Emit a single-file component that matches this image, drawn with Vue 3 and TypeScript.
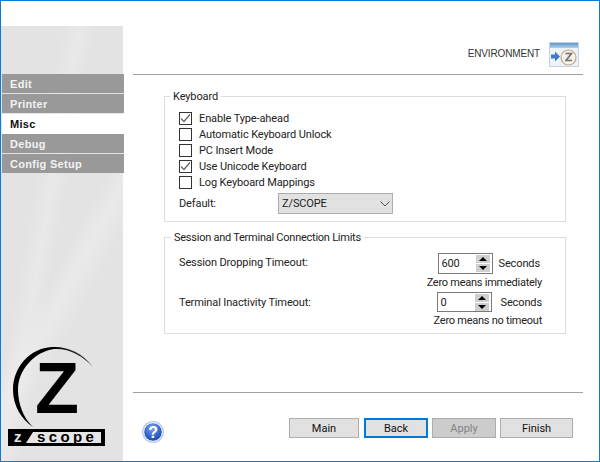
<script setup lang="ts">
const navItems = [
  { label: 'Edit', active: false },
  { label: 'Printer', active: false },
  { label: 'Misc', active: true },
  { label: 'Debug', active: false },
  { label: 'Config Setup', active: false },
]
const options = [
  { label: 'Enable Type-ahead', checked: true },
  { label: 'Automatic Keyboard Unlock', checked: false },
  { label: 'PC Insert Mode', checked: false },
  { label: 'Use Unicode Keyboard', checked: true },
  { label: 'Log Keyboard Mappings', checked: false },
]
</script>

<template>
  <div class="window">
    <aside class="sidebar">
      <nav class="nav">
        <div v-for="item in navItems" :key="item.label" class="nav-item" :class="{ active: item.active }">{{ item.label }}</div>
      </nav>
      <svg class="logo" width="106" height="106" viewBox="0 0 106 106">
        <defs>
          <linearGradient id="arcFade" x1="0" y1="1" x2="1" y2="0">
            <stop offset="0" stop-color="#000" />
            <stop offset="0.75" stop-color="#000" />
            <stop offset="1" stop-color="#666" />
          </linearGradient>
        </defs>
        <path d="M92 24 C81 9 65 3 51 4 C29 5 12 24 12 47 C12 62 20 76 32 84 C22 75 17 60 17 47 C17 27 33 9 53 6 C68 5 82 13 92 24 Z" fill="url(#arcFade)" />
        <text x="34" y="70" class="logo-z">Z</text>
        <rect x="7" y="86" width="97" height="17" fill="#000" />
        <polygon points="25,100 32,89 100,89 100,100" fill="#e6e6e6" />
        <text x="13" y="99" class="band-z">z</text>
        <text x="36" y="99" class="band-scope">scope</text>
      </svg>
    </aside>

    <main class="main">
      <header class="head">
        <span class="head-title">ENVIRONMENT</span>
        <svg class="env-icon" width="30" height="25" viewBox="0 0 30 25">
          <defs>
            <linearGradient id="envBar" x1="0" y1="0" x2="0" y2="1">
              <stop offset="0" stop-color="#5f97cb" />
              <stop offset="1" stop-color="#b5d0e8" />
            </linearGradient>
          </defs>
          <rect x="0.5" y="0.5" width="29" height="24" fill="#edf3f9" stroke="#c3d2e0" />
          <rect x="1" y="1" width="28" height="5" fill="url(#envBar)" />
          <circle cx="19.5" cy="15.5" r="7.5" fill="#f6f3ec" stroke="#c4a987" stroke-width="1.2" />
          <rect x="15.5" y="10.5" width="8" height="9" fill="#ecebe8" />
          <path d="M16.5 11.5 H22.5 L17 18.5 H23" fill="none" stroke="#77736e" stroke-width="1.6" />
          <path d="M2 12.5 H6 V9.5 L11 14.5 L6 19.5 V16.5 H2 Z" fill="#3f7cc4" />
        </svg>
      </header>

      <div class="panels">
        <fieldset class="group kb">
          <legend>Keyboard</legend>
          <label v-for="o in options" :key="o.label" class="check-row">
            <span class="box">
              <svg v-if="o.checked" width="11" height="11" viewBox="0 0 11 11"><path d="M1 5.5 L4 8.5 L10 1.5" fill="none" stroke="#666" stroke-width="1.3" /></svg>
            </span>
            <span>{{ o.label }}</span>
          </label>
          <div class="default-row">
            <span class="default-label">Default:</span>
            <div class="select">
              <span>Z/SCOPE</span>
              <svg width="10" height="6" viewBox="0 0 10 6"><path d="M0.5 0.5 L5 5 L9.5 0.5" fill="none" stroke="#555" stroke-width="1" /></svg>
            </div>
          </div>
        </fieldset>

        <fieldset class="group limits">
          <legend>Session and Terminal Connection Limits</legend>
          <div class="limit">
            <span class="limit-label">Session Dropping Timeout:</span>
            <div class="limit-ctl first">
              <div class="spin-line">
                <div class="spin">
                  <span>600</span>
                  <div class="arrows"><i class="up"></i><i class="down"></i></div>
                </div>
                <span class="secs">Seconds</span>
              </div>
              <div class="hint">Zero means immediately</div>
            </div>
          </div>
          <div class="limit second">
            <span class="limit-label">Terminal Inactivity Timeout:</span>
            <div class="limit-ctl">
              <div class="spin-line">
                <div class="spin">
                  <span>0</span>
                  <div class="arrows"><i class="up"></i><i class="down"></i></div>
                </div>
                <span class="secs">Seconds</span>
              </div>
              <div class="hint">Zero means no timeout</div>
            </div>
          </div>
        </fieldset>
      </div>

      <footer class="foot">
        <svg class="help" width="22" height="22" viewBox="0 0 22 22">
          <defs>
            <radialGradient id="helpFill" cx="0.45" cy="0.3" r="0.8">
              <stop offset="0" stop-color="#7fa6ec" />
              <stop offset="0.6" stop-color="#2f5fc8" />
              <stop offset="1" stop-color="#17409a" />
            </radialGradient>
          </defs>
          <circle cx="11" cy="11" r="11" fill="#b9cbe8" />
          <circle cx="11" cy="11" r="9.3" fill="url(#helpFill)" stroke="#fff" stroke-width="1" />
          <text x="11" y="16.5" text-anchor="middle" class="help-q">?</text>
        </svg>
        <div class="buttons">
          <button class="btn main-btn">Main</button>
          <button class="btn back-btn">Back</button>
          <button class="btn apply-btn">Apply</button>
          <button class="btn finish-btn">Finish</button>
        </div>
      </footer>
    </main>
  </div>
</template>

<style>
html, body { margin: 0; background: #fff; }
</style>

<style scoped>
.window {
  box-sizing: border-box;
  width: 600px;
  height: 462px;
  border: 1px solid #0a7bd6;
  background: #fff;
  display: flex;
  font-family: Roboto, "Liberation Sans", Arial, sans-serif;
  font-size: 11px;
  letter-spacing: -0.12px;
  color: #222;
  overflow: hidden;
}
.sidebar {
  width: 122px;
  margin-top: 25px;
  flex: none;
  display: flex;
  flex-direction: column;
  justify-content: space-between;
  background:
    linear-gradient(118deg, transparent 52%, rgba(255,255,255,.22) 58%, transparent 66%),
    linear-gradient(100deg, transparent 30%, rgba(255,255,255,.18) 40%, transparent 48%),
    #e3e3e3;
}
.nav {
  margin: 48px -1px 0 1px;
  display: flex;
  flex-direction: column;
  font-family: "Liberation Sans", Arial, sans-serif;
}
.nav-item {
  height: 19px;
  line-height: 20px;
  margin-bottom: 1px;
  padding-left: 8px;
  background: #999;
  color: #f2f2f2;
  font-weight: bold;
  letter-spacing: .3px;
}
.nav-item.active { background: #fff; color: #111; height: 20px; margin-bottom: 0; }
.logo { display: block; margin: 0 0 12px 0; letter-spacing: 0; }
.logo-z { font: bold 72px "Liberation Sans", Arial, sans-serif; fill: #000; }
.band-z { font: bold 15px "Liberation Sans", Arial, sans-serif; fill: #e6e6e6; }
.band-scope { font: bold 15px "Liberation Sans", Arial, sans-serif; fill: #000; letter-spacing: 3.4px; }

.main { flex: 1; display: flex; flex-direction: column; padding: 0 16px 0 10px; min-width: 0; }
.head {
  height: 73px;
  border-bottom: 1px solid #a0a0a0;
  display: flex;
  align-items: flex-start;
  justify-content: flex-end;
  flex: none;
  padding-right: 4px;
  box-sizing: content-box;
}
.head-title { margin: 46px 9px 0 0; color: #333; font: 10px/13px "Liberation Sans", Arial, sans-serif; letter-spacing: -0.15px; }
.env-icon { margin-top: 41px; }

.panels { flex: 1; padding: 15px 17px 0 31px; display: flex; flex-direction: column; gap: 9px; border-bottom: 1px solid #a0a0a0; }
.group {
  margin: 0;
  padding: 0;
  border: 1px solid #dcdcdc;
  min-width: 0;
}
.group legend { margin-left: -9px; padding: 0 3px; line-height: 13px; font-size: 11px; }
.limits legend { margin-left: -8px; letter-spacing: -0.25px; }
.kb { height: 132px; box-sizing: border-box; padding: 7px 14px 0; }
.limits { height: 103px; box-sizing: border-box; padding: 9px 14px 0; }
.check-row { display: flex; align-items: center; height: 16px; gap: 7px; }
.box {
  box-sizing: border-box;
  width: 13px;
  height: 13px;
  border: 1px solid #333;
  background: #fff;
  display: flex;
  align-items: center;
  justify-content: center;
}
.default-row { display: flex; align-items: center; margin-top: 3px; }
.default-label { width: 99px; }
.select {
  box-sizing: border-box;
  width: 115px;
  height: 21px;
  background: #e1e1e1;
  border: 1px solid #adadad;
  display: flex;
  align-items: center;
  justify-content: space-between;
  padding: 0 2px 0 3px;
}
.limit { display: flex; justify-content: space-between; height: 39px; }
.limit-label { margin-top: 3px; line-height: 14px; }
.second .limit-label { margin-top: 4px; }
.limit-ctl { display: flex; flex-direction: column; align-items: flex-end; padding-right: 9px; }
.limit-ctl.first .spin-line { margin-right: 2px; }
.spin-line { display: flex; align-items: center; gap: 5px; }
.second .spin-line { gap: 8px; }
.spin {
  box-sizing: border-box;
  width: 55px;
  height: 21px;
  border: 1px solid #7a7a7a;
  display: flex;
  align-items: center;
  justify-content: space-between;
  padding: 0 2px 0 2px;
}
.second .spin { height: 20px; }
.arrows { display: flex; flex-direction: column; gap: 1px; }
.arrows i { display: block; width: 14px; height: 8px; background: #cfcfcf; position: relative; }
.arrows i::after {
  content: "";
  position: absolute;
  left: 3px;
  border-left: 4px solid transparent;
  border-right: 4px solid transparent;
}
.arrows .up::after { top: 2px; border-bottom: 4px solid #000; }
.arrows .down::after { top: 2px; border-top: 4px solid #000; }
.hint { line-height: 14px; margin-top: 2px; letter-spacing: -0.25px; }

.foot { height: 68px; flex: none; display: flex; align-items: flex-start; justify-content: space-between; padding: 25px 10px 0 9px; box-sizing: border-box; }
.help { margin-top: 3px; }
.help-q { font: bold 16px "Liberation Sans", Arial, sans-serif; fill: #fff; }
.buttons { display: flex; gap: 4px; }
.btn {
  box-sizing: border-box;
  height: 20px;
  padding: 0;
  background: #e1e1e1;
  border: 1px solid #adadad;
  font: 11px Roboto, "Liberation Sans", Arial, sans-serif;
  color: #111;
  border-radius: 0;
}
.main-btn { width: 70px; margin-right: 1px; }
.back-btn { width: 64px; border: 2px solid #0078d7; }
.apply-btn { width: 64px; background: #ccc; color: #838383; }
.finish-btn { width: 73px; }
</style>
